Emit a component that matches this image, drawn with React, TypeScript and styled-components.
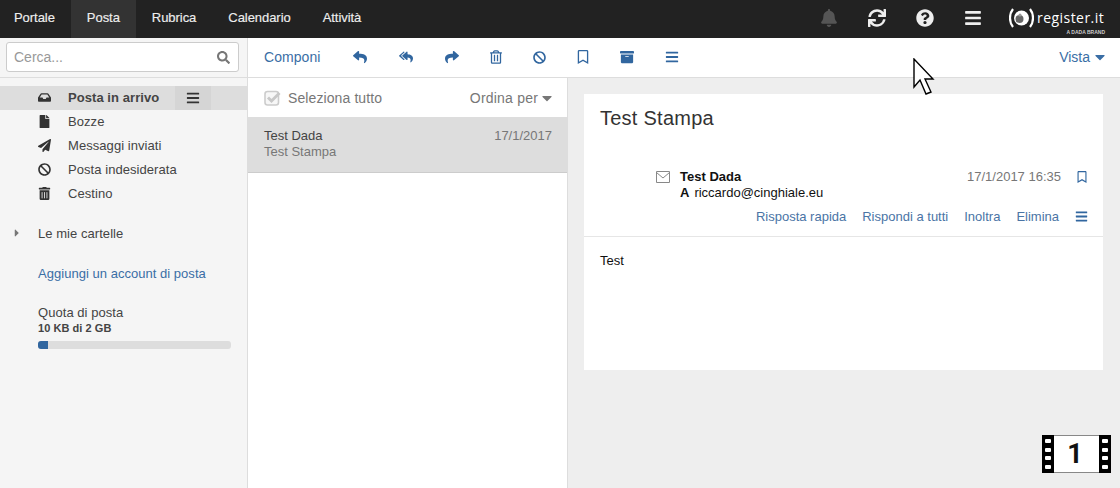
import React from "react";
import styled, { createGlobalStyle } from "styled-components";
import {
  FaArchive, FaBan, FaBars, FaBell, FaCaretDown, FaCaretRight, FaFile, FaInbox, FaPaperPlane,
  FaQuestionCircle, FaRegBookmark, FaRegTrashAlt, FaReply, FaReplyAll, FaSearch, FaShare, FaSync, FaTrashAlt,
} from "react-icons/fa";

const Global = createGlobalStyle`
  html, body { margin: 0; padding: 0; }
  body { font-family: "Liberation Sans", Arial, sans-serif; font-size: 14px; color: #333; background: #eee; }
`;

const Page = styled.div`
  position: relative;
  width: 1120px;
  height: 488px;
  overflow: hidden;
  display: flex;
  flex-direction: column;
`;

const TopBar = styled.header`
  height: 38px;
  background: #222;
  display: flex;
  align-items: stretch;
  color: #fff;
  flex: none;
`;

const NavTab = styled.a<{ $active?: boolean }>`
  display: flex;
  align-items: center;
  padding: 0 16px 4px;
  font-size: 13px;
  letter-spacing: -0.05px;
  -webkit-text-stroke: 0.15px #eee;
  color: #eee;
  background: ${(p) => (p.$active ? "#333" : "transparent")};
  &:first-child { padding-left: 14px; }
`;

const TopIcons = styled.div`
  margin-left: auto;
  display: flex;
  align-items: center;
  padding-bottom: 2px;
  gap: 30px;
`;

const TopIcon = styled.span<{ $dim?: boolean }>`
  display: flex;
  justify-content: center;
  width: 18px;
  font-size: 18px;
  color: ${(p) => (p.$dim ? "#555" : "#eee")};
`;

const Logo = styled.div`
  display: flex;
  align-items: center;
  gap: 3px;
  position: relative;
  margin-left: -3px;
  margin-right: 8px;
  width: 103px;
`;

const LogoWord = styled.span`
  font-family: "Open Sans", sans-serif;
  font-size: 14px;
  letter-spacing: 0.45px;
  line-height: 16px;
  color: #fff;
`;

const LogoTag = styled.span`
  position: absolute;
  right: 7px;
  bottom: -6px;
  font-size: 5px;
  font-weight: 700;
  color: #ccc;
`;

const Body = styled.div`
  flex: 1;
  display: flex;
  min-height: 0;
`;

const Sidebar = styled.aside`
  width: 247px;
  flex: none;
  background: #f5f5f5;
  border-right: 1px solid #ddd;
`;

const SearchWrap = styled.div`
  height: 40px;
  box-sizing: border-box;
  padding: 4px 8px 0 6px;
  background: #f5f5f5;
  border-bottom: 1px solid #ddd;
`;

const SearchBox = styled.div`
  height: 30px;
  box-sizing: border-box;
  background: #fff;
  border: 1px solid #ccc;
  border-radius: 3px;
  display: flex;
  align-items: center;
  justify-content: space-between;
  padding: 0 8px 0 7px;
  color: #999;
  font-size: 14px;
  svg { color: #777; font-size: 13px; }
`;

const Folders = styled.ul`
  list-style: none;
  margin: 8px 0 0;
  padding: 0;
`;

const Folder = styled.li<{ $active?: boolean }>`
  height: 24px;
  box-sizing: border-box;
  padding: 0 0 2px 38px;
  display: flex;
  align-items: center;
  font-size: 13px;
  letter-spacing: 0.06px;
  color: #444;
  background: ${(p) => (p.$active ? "#ddd" : "transparent")};
  font-weight: ${(p) => (p.$active ? 700 : 400)};
`;

const FolderIcon = styled.span`
  width: 30px;
  flex: none;
  display: flex;
  font-size: 13px;
  color: #333;
`;

const FolderMenu = styled.span`
  margin: 0 0 -2px 16px;
  width: 36px;
  height: 24px;
  background: #d5d5d5;
  display: flex;
  align-items: center;
  justify-content: center;
  font-size: 14px;
  color: #333;
`;

const Tree = styled.div`
  margin-top: 15px;
  height: 24px;
  display: flex;
  align-items: center;
  font-size: 13px;
  letter-spacing: 0.05px;
  color: #444;
`;

const TreeArrow = styled.span`
  width: 38px;
  padding-left: 11px;
  box-sizing: border-box;
  display: flex;
  color: #777;
  font-size: 12px;
`;

const AddAccount = styled.a`
  display: block;
  margin: 17px 0 0 38px;
  height: 24px;
  line-height: 24px;
  font-size: 13px;
  letter-spacing: 0.03px;
  color: #3a6ea5;
`;

const Quota = styled.div`
  margin: 19px 16px 0 38px;
  color: #444;
`;

const QuotaLabel = styled.div`
  font-size: 13px;
  line-height: 16px;
  letter-spacing: 0.05px;
`;

const QuotaValue = styled.div`
  font-size: 11px;
  font-weight: 700;
  line-height: 15px;
  letter-spacing: 0.05px;
`;

const QuotaTrack = styled.div`
  margin-top: 5px;
  height: 8px;
  border-radius: 3px;
  background: #ddd;
  overflow: hidden;
`;

const QuotaFill = styled.div`
  height: 100%;
  background: #31669f;
`;

const Main = styled.main`
  flex: 1;
  display: flex;
  flex-direction: column;
  min-width: 0;
`;

const Toolbar = styled.div`
  height: 40px;
  flex: none;
  box-sizing: border-box;
  background: #fff;
  border-bottom: 1px solid #ddd;
  display: flex;
  align-items: center;
  padding: 0 12px 1px 16px;
  color: #31669f;
`;

const Compose = styled.a`
  font-size: 14px;
  letter-spacing: 0.05px;
  color: #3a6ea5;
  margin-right: 32px;
`;

const ToolIcon = styled.span<{ $w: number; $size: number }>`
  display: flex;
  justify-content: center;
  width: ${(p) => p.$w}px;
  margin-right: 30px;
  font-size: ${(p) => p.$size}px;
`;

const ViewMenu = styled.a`
  margin-left: auto;
  display: flex;
  align-items: center;
  gap: 2px;
  font-size: 14px;
  color: #3a6ea5;
`;

const Panes = styled.div`
  flex: 1;
  display: flex;
  min-height: 0;
`;

const ListPane = styled.section`
  width: 320px;
  flex: none;
  box-sizing: border-box;
  background: #fff;
  border-right: 1px solid #ddd;
`;

const ListHead = styled.div`
  height: 39px;
  display: flex;
  align-items: center;
  padding: 0 12px 0 16px;
  color: #777;
  font-size: 14px;
  letter-spacing: 0.1px;
`;

const SelectBox = styled.svg`
  flex: none;
  margin-right: 7px;
`;

const SortMenu = styled.span`
  margin-left: auto;
  display: flex;
  align-items: center;
  gap: 1px;
  letter-spacing: 0.2px;
`;

const MessageRow = styled.article`
  height: 56px;
  box-sizing: border-box;
  background: #ddd;
  border-bottom: 1px solid #ccc;
  padding: 11px 15px 0 16px;
  display: flex;
  justify-content: space-between;
  font-size: 13px;
  line-height: 16px;
`;

const MessageFrom = styled.div`
  color: #444;
`;

const MessageSubject = styled.div`
  color: #777;
`;

const MessageDate = styled.div`
  color: #777;
`;

const Reader = styled.section`
  flex: 1;
  background: #eee;
  padding: 16px 17px 0 16px;
`;

const Card = styled.div`
  background: #fff;
  height: 276px;
`;

const Subject = styled.h1`
  margin: 0;
  padding: 11px 16px 0;
  font-size: 20px;
  line-height: 26px;
  font-weight: 400;
  letter-spacing: 0.25px;
  color: #333;
`;

const Head = styled.div`
  margin-top: 26px;
  height: 80px;
  box-sizing: border-box;
  border-bottom: 1px solid #e6e6e6;
  padding: 12px 15px 0 72px;
`;

const HeadRow = styled.div`
  display: flex;
  align-items: flex-start;
`;

const EnvelopeIcon = styled.svg`
  flex: none;
  margin: 2px 10px 0 0;
`;

const Sender = styled.div`
  flex: 1;
  font-size: 13px;
  line-height: 16px;
  color: #111;
`;

const SenderName = styled.div`
  font-weight: 700;
`;

const SenderTo = styled.div`
  font-size: 13px;
`;

const ToLabel = styled.b`
  margin-right: 5px;
`;

const SentAt = styled.div`
  font-size: 13px;
  line-height: 16px;
  color: #777;
`;

const Flag = styled.span`
  display: flex;
  margin-left: 15px;
  margin-top: 2px;
  font-size: 12px;
  color: #31669f;
`;

const Actions = styled.div`
  display: flex;
  justify-content: flex-end;
  align-items: center;
  gap: 16px;
  margin-top: 8px;
  font-size: 13px;
  color: #4a74a5;
`;

const ActionMenu = styled.span`
  display: flex;
  font-size: 13px;
  color: #31669f;
`;

const MailText = styled.div`
  padding: 16px;
  font-size: 13px;
  line-height: 16px;
  color: #111;
`;

const FilmBadge = styled.div`
  position: absolute;
  right: 9px;
  bottom: 15px;
  width: 69px;
  height: 38px;
  box-sizing: border-box;
  display: flex;
  background: #fff;
  border-top: 1px solid #888;
  border-bottom: 1px solid #888;
`;

const FilmStrip = styled.div`
  width: 12px;
  margin: -1px 0;
  background: #000;
  display: flex;
  flex-direction: column;
  justify-content: space-evenly;
  align-items: center;
`;

const FilmHole = styled.span`
  width: 6px;
  height: 4px;
  border-radius: 1px;
  background: #fff;
`;

const FilmNumber = styled.div`
  flex: 1;
  padding-right: 3px;
  text-align: center;
  font-family: Roboto, sans-serif;
  font-size: 27px;
  font-weight: 700;
  line-height: 36px;
  color: #111;
`;

const Cursor = styled.svg`
  position: absolute;
  left: 913px;
  top: 58px;
`;

const folders = [
  { icon: <FaFile />, label: "Bozze" },
  { icon: <FaPaperPlane />, label: "Messaggi inviati" },
  { icon: <FaBan />, label: "Posta indesiderata" },
  { icon: <FaTrashAlt />, label: "Cestino" },
];

const tools = [
  { Icon: FaReply, w: 16, size: 14 },
  { Icon: FaReplyAll, w: 16, size: 14 },
  { Icon: FaShare, w: 16, size: 14 },
  { Icon: FaRegTrashAlt, w: 12, size: 14 },
  { Icon: FaBan, w: 15, size: 13 },
  { Icon: FaRegBookmark, w: 12, size: 14 },
  { Icon: FaArchive, w: 16, size: 14 },
  { Icon: FaBars, w: 14, size: 14 },
];

const holes = [0, 1, 2, 3];

function FilmSide() {
  return (
    <FilmStrip>
      {holes.map((h) => (
        <FilmHole key={h} />
      ))}
    </FilmStrip>
  );
}

export default function App() {
  return (
    <Page>
      <Global />
      <TopBar>
        <NavTab>Portale</NavTab>
        <NavTab $active>Posta</NavTab>
        <NavTab>Rubrica</NavTab>
        <NavTab>Calendario</NavTab>
        <NavTab>Attività</NavTab>
        <TopIcons>
          <TopIcon $dim><FaBell /></TopIcon>
          <TopIcon><FaSync /></TopIcon>
          <TopIcon><FaQuestionCircle /></TopIcon>
          <TopIcon><FaBars /></TopIcon>
          <Logo>
            <svg width="25" height="22" viewBox="0 0 25 22">
              <path d="M4 2C0 7 0 15 4 20M21 2c4 5 4 13 0 18" fill="none" stroke="#fff" strokeWidth="2.2" />
              <circle cx="12.5" cy="11" r="7.5" fill="#fff" />
              <circle cx="10.5" cy="12" r="4" fill="#666" />
              <circle cx="11" cy="8" r="1.5" fill="#999" />
            </svg>
            <LogoWord>register.it</LogoWord>
            <LogoTag>A DADA BRAND</LogoTag>
          </Logo>
        </TopIcons>
      </TopBar>
      <Body>
        <Sidebar>
          <SearchWrap>
            <SearchBox>
              Cerca...
              <FaSearch />
            </SearchBox>
          </SearchWrap>
          <Folders>
            <Folder $active>
              <FolderIcon><FaInbox /></FolderIcon>
              Posta in arrivo
              <FolderMenu><FaBars /></FolderMenu>
            </Folder>
            {folders.map((f) => (
              <Folder key={f.label}>
                <FolderIcon>{f.icon}</FolderIcon>
                {f.label}
              </Folder>
            ))}
          </Folders>
          <Tree>
            <TreeArrow><FaCaretRight /></TreeArrow>
            Le mie cartelle
          </Tree>
          <AddAccount>Aggiungi un account di posta</AddAccount>
          <Quota>
            <QuotaLabel>Quota di posta</QuotaLabel>
            <QuotaValue>10 KB di 2 GB</QuotaValue>
            <QuotaTrack>
              <QuotaFill style={{ width: "5%" }} />
            </QuotaTrack>
          </Quota>
        </Sidebar>
        <Main>
          <Toolbar>
            <Compose>Componi</Compose>
            {tools.map(({ Icon, w, size }, i) => (
              <ToolIcon key={i} $w={w} $size={size}><Icon /></ToolIcon>
            ))}
            <ViewMenu>Vista <FaCaretDown size={16} /></ViewMenu>
          </Toolbar>
          <Panes>
            <ListPane>
              <ListHead>
                <SelectBox width="17" height="16" viewBox="0 0 17 16">
                  <rect x="1" y="1.5" width="13.5" height="13.5" rx="2.5" fill="#f7f7f7" stroke="#ccc" strokeWidth="1.6" />
                  <path d="M4 7.5l3.5 3.5L15.5 3" fill="none" stroke="#c8c8c8" strokeWidth="3" />
                </SelectBox>
                Seleziona tutto
                <SortMenu>Ordina per <FaCaretDown size={16} /></SortMenu>
              </ListHead>
              <MessageRow>
                <div>
                  <MessageFrom>Test Dada</MessageFrom>
                  <MessageSubject>Test Stampa</MessageSubject>
                </div>
                <MessageDate>17/1/2017</MessageDate>
              </MessageRow>
            </ListPane>
            <Reader>
              <Card>
                <Subject>Test Stampa</Subject>
                <Head>
                  <HeadRow>
                    <EnvelopeIcon width="14" height="12" viewBox="0 0 14 12">
                      <path d="M.5.5h13v11H.5zM.5 1.5 7 7l6.5-5.5" fill="none" stroke="#888" />
                    </EnvelopeIcon>
                    <Sender>
                      <SenderName>Test Dada</SenderName>
                      <SenderTo><ToLabel>A</ToLabel>riccardo@cinghiale.eu</SenderTo>
                    </Sender>
                    <SentAt>17/1/2017 16:35</SentAt>
                    <Flag><FaRegBookmark /></Flag>
                  </HeadRow>
                  <Actions>
                    <span>Risposta rapida</span>
                    <span>Rispondi a tutti</span>
                    <span>Inoltra</span>
                    <span>Elimina</span>
                    <ActionMenu><FaBars /></ActionMenu>
                  </Actions>
                </Head>
                <MailText>Test</MailText>
              </Card>
            </Reader>
          </Panes>
        </Main>
      </Body>
      <Cursor width="22" height="38" viewBox="0 0 22 38">
        <path d="M1 1v28l6-7 6 14 5-2-6-13h8z" fill="#fff" stroke="#000" strokeWidth="1.4" />
      </Cursor>
      <FilmBadge>
        <FilmSide />
        <FilmNumber>1</FilmNumber>
        <FilmSide />
      </FilmBadge>
    </Page>
  );
}
